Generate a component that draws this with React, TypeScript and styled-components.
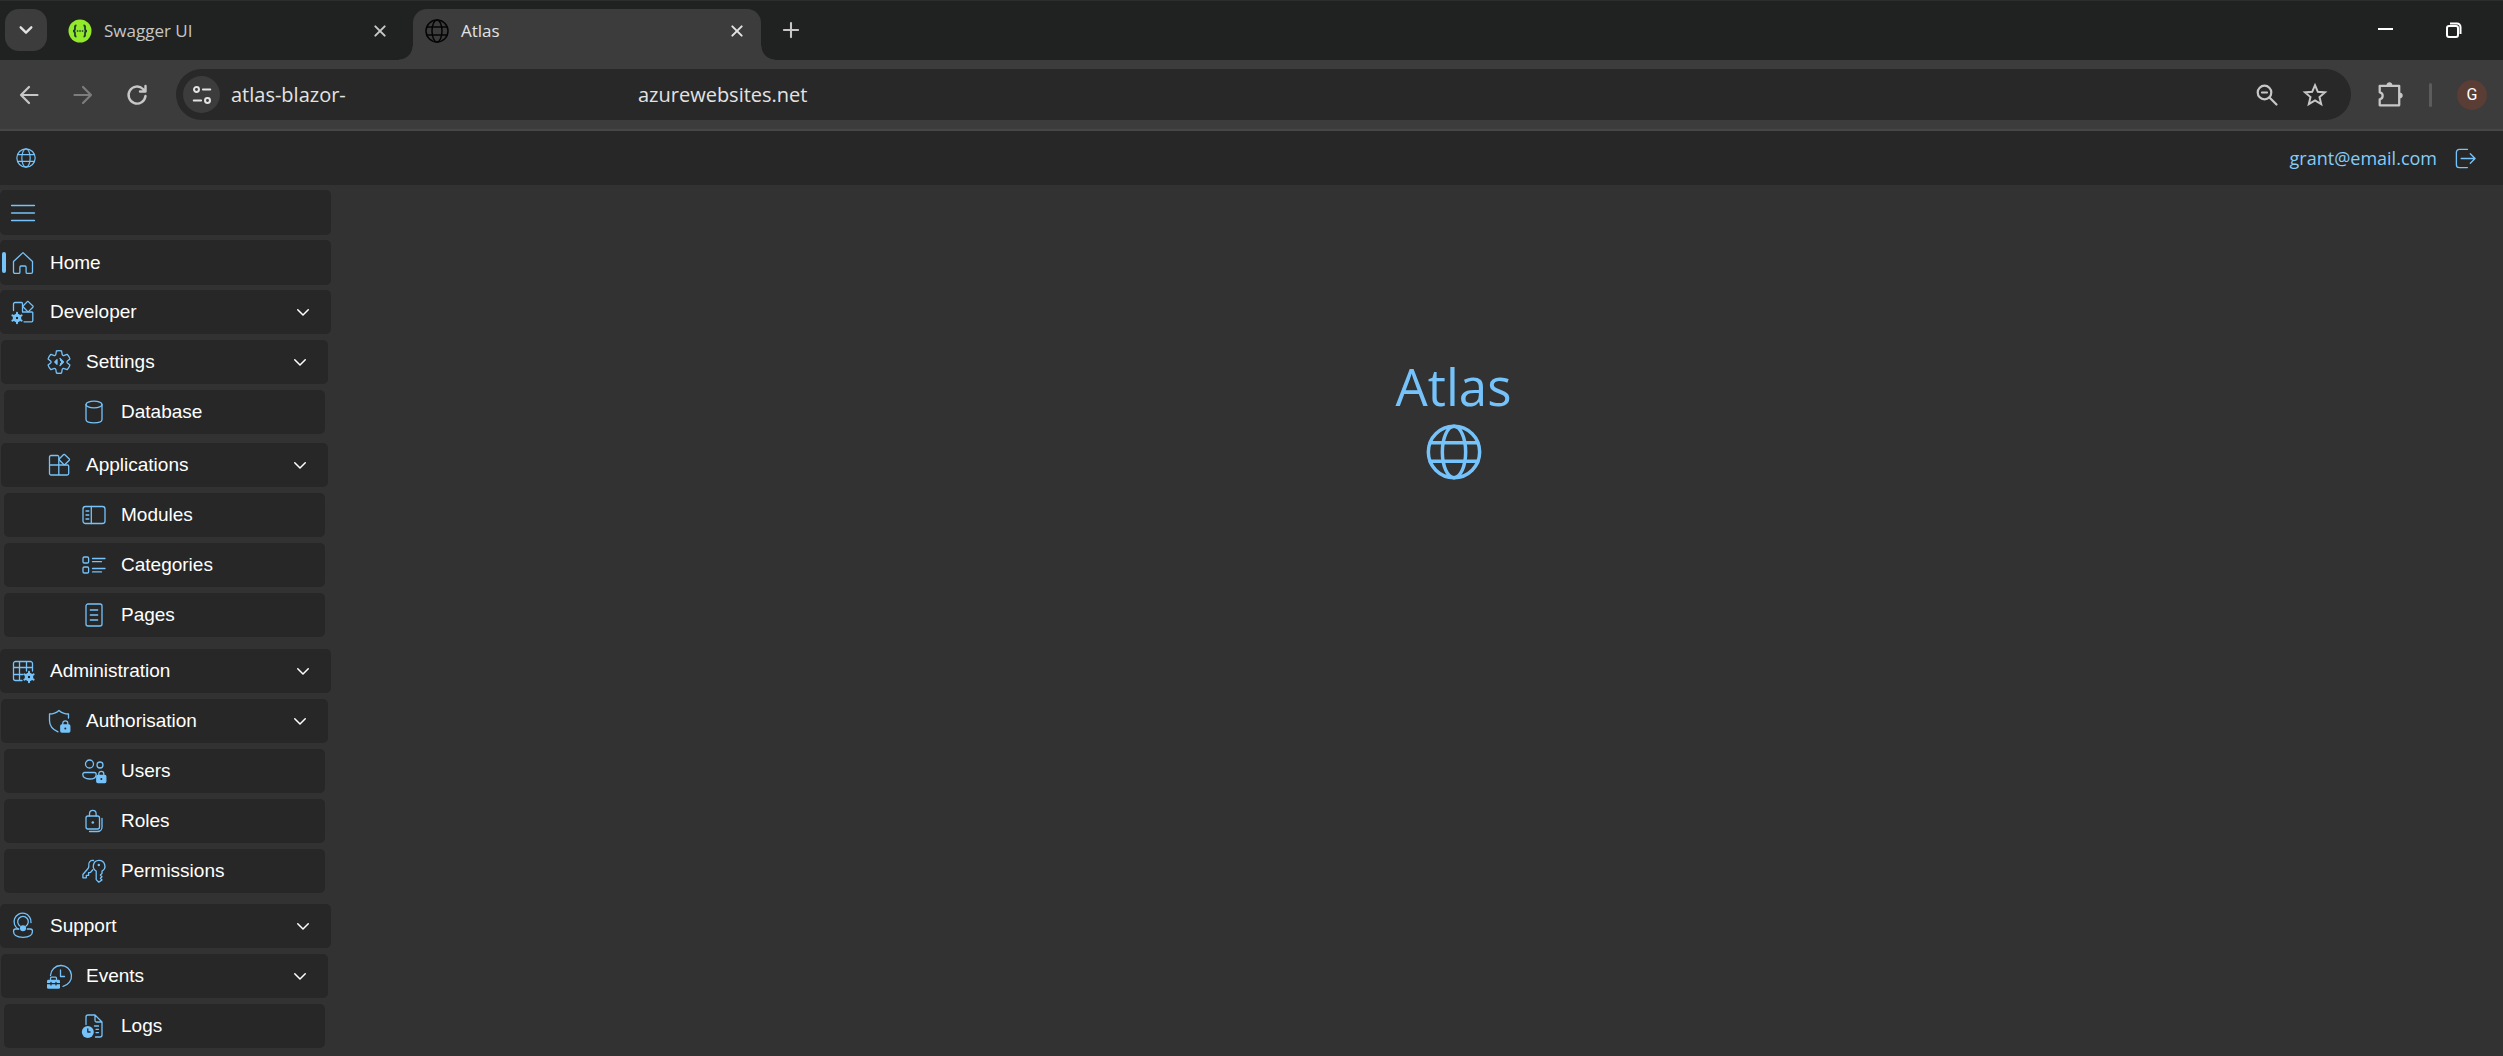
import React from "react";
import styled, { createGlobalStyle } from "styled-components";

const ui = '"Segoe UI", "Open Sans", "Noto Sans", sans-serif';
const accent = "#75c3fa";

const GlobalStyle = createGlobalStyle`
  *, *::before, *::after { box-sizing: border-box; }
  html, body { margin: 0; background: #323232; }
  body { font-family: ${ui}; color: #fff; }
  button { font: inherit; color: inherit; background: none; border: 0; padding: 0; cursor: pointer; }
  a { color: inherit; text-decoration: none; }
  svg { display: block; flex: none; }
`;

const Window = styled.div`
  display: flex;
  flex-direction: column;
  min-height: 100vh;
  background: #323232;
`;

/* ---------- browser chrome ---------- */

const TabStrip = styled.div`
  display: flex;
  align-items: flex-end;
  height: 60px;
  padding-left: 5px;
  background: #202221;
  border-top: 1px solid #2c2e2d;
`;

const TabSearch = styled.button`
  display: grid;
  place-items: center;
  width: 42px;
  height: 42px;
  margin-bottom: 9px;
  border-radius: 14px;
  background: #3c3c3c;
  color: #e3e3e3;
`;

const Tab = styled.div<{ $active?: boolean }>`
  position: relative;
  display: flex;
  align-items: center;
  gap: 12px;
  width: 348px;
  height: 51px;
  margin-left: 9px;
  padding: 0 12px 8px 12px;
  border-radius: 14px 14px 0 0;
  background: ${(p) => (p.$active ? "#3c3c3c" : "transparent")};
  color: ${(p) => (p.$active ? "#e3e3e3" : "#c7c7c7")};
  &::before, &::after {
    content: "";
    display: ${(p) => (p.$active ? "block" : "none")};
    position: absolute;
    bottom: 0;
    width: 14px;
    height: 14px;
  }
  &::before {
    right: 100%;
    background: radial-gradient(circle at 0 0, transparent 13px, #3c3c3c 14px);
  }
  &::after {
    left: 100%;
    background: radial-gradient(circle at 100% 0, transparent 13px, #3c3c3c 14px);
  }
`;

const TabTitle = styled.span`
  flex: 1;
  font-size: 17px;
  line-height: 24px;
`;

const IconButton = styled.button<{ $size?: number; $tone?: string }>`
  display: grid;
  place-items: center;
  width: ${(p) => p.$size ?? 24}px;
  height: ${(p) => p.$size ?? 24}px;
  color: ${(p) => p.$tone ?? "#c7c7c7"};
`;

const NewTab = styled.div`
  display: flex;
  align-items: center;
  height: 60px;
  padding-left: 18px;
`;

const WindowButtons = styled.div`
  display: flex;
  align-items: center;
  gap: 44px;
  height: 60px;
  margin-left: auto;
  padding-right: 37px;
`;

const Toolbar = styled.div`
  display: flex;
  align-items: center;
  height: 71px;
  padding: 0 16px 0 17px;
  background: #3c3c3c;
  border-bottom: 2px solid #474747;
`;

const NavButtons = styled.div`
  display: flex;
  gap: 30px;
  margin-right: 27px;
`;

const AddressBar = styled.div`
  display: flex;
  align-items: center;
  flex: 1;
  height: 51px;
  padding: 0 24px 0 7px;
  border-radius: 26px;
  background: #282828;
  font-size: 20px;
  line-height: 28px;
  color: #e3e3e3;
`;

const SiteInfo = styled.button`
  display: grid;
  place-items: center;
  width: 37px;
  height: 37px;
  margin-right: 11px;
  border-radius: 50%;
  background: #3c3c3c;
  color: #e3e3e3;
`;

const Host = styled.span`
  width: 407px;
`;

const AddressActions = styled.div`
  display: flex;
  gap: 24px;
  margin-left: auto;
`;

const ToolbarEnd = styled.div`
  display: flex;
  align-items: center;
  gap: 25px;
  margin-left: 25px;
`;

const Divider = styled.span`
  width: 3px;
  height: 24px;
  border-radius: 2px;
  background: #5c5c5c;
`;

const Avatar = styled.button`
  width: 30px;
  height: 30px;
  border-radius: 50%;
  background: #5a3d34;
  font-family: Roboto, sans-serif;
  font-size: 16px;
  line-height: 30px;
  color: #fff;
`;

/* ---------- application ---------- */

const Header = styled.header`
  display: flex;
  align-items: center;
  justify-content: space-between;
  height: 54px;
  padding: 0 26px 0 16px;
  background: #272727;
  color: ${accent};
`;

const Account = styled.div`
  display: flex;
  align-items: center;
  gap: 16px;
  font-size: 18px;
  line-height: 24px;
  color: #83cdfb;
`;

const Body = styled.div`
  display: flex;
  flex: 1;
`;

const Sidebar = styled.nav`
  display: flex;
  flex-direction: column;
  gap: 12px;
  width: 331px;
  padding: 5px 0 8px;
  font-family: Arial, "Liberation Sans", sans-serif;
`;

const List = styled.ul<{ $gap: number }>`
  display: flex;
  flex-direction: column;
  gap: ${(p) => p.$gap}px;
  margin: 0;
  padding: 0;
  list-style: none;
`;

const Item = styled.li`
  display: flex;
  flex-direction: column;
  gap: 6px;
`;

const rowInset = ["0", "0 3px 0 1px", "0 6px 0 4px"];
const rowPadding = ["0 19px 0 11px", "0 19px 0 46px", "0 19px 0 78px"];

const Row = styled.button<{ $level: number; $tall?: boolean }>`
  position: relative;
  display: flex;
  align-items: center;
  gap: 15px;
  height: ${(p) => (p.$tall ? 45 : 44)}px;
  margin: ${(p) => rowInset[p.$level]};
  padding: ${(p) => rowPadding[p.$level]};
  border-radius: 5px;
  background: #272727;
  font-size: 19px;
  line-height: 24px;
  text-align: left;
  color: #fff;
  > svg:first-of-type { color: ${accent}; }
`;

const Label = styled.span`
  flex: 1;
`;

const ActiveMark = styled.span`
  position: absolute;
  left: 2px;
  top: 12px;
  width: 4px;
  height: 21px;
  border-radius: 2px;
  background: ${accent};
`;

const Main = styled.main`
  display: flex;
  flex: 1;
  flex-direction: column;
  align-items: center;
  gap: 4px;
  padding: 167px 0 0 73px;
  color: ${accent};
`;

const Title = styled.h1`
  margin: 0;
  font-size: 51px;
  font-weight: 400;
  line-height: 68px;
`;

/* ---------- icons ---------- */

const Svg = ({ size = 24, w = 1.3, children }: { size?: number; w?: number; children: React.ReactNode }) => (
  <svg width={size} height={size} viewBox="0 0 24 24" fill="none" stroke="currentColor" strokeWidth={w} strokeLinecap="round" strokeLinejoin="round" overflow="visible" aria-hidden="true">
    {children}
  </svg>
);

const Globe = ({ size, w }: { size: number; w: number }) => (
  <Svg size={size} w={w}>
    <circle cx="12" cy="12" r="11" />
    <ellipse cx="12" cy="12" rx="5" ry="11" />
    <path d="M1.8 8h20.4M1.8 16h20.4" />
  </Svg>
);

const Chevron = () => (
  <Svg size={18} w={2}><path d="m5 9 7 7 7-7" /></Svg>
);

const MiniGear = ({ x, y }: { x: number; y: number }) => (
  <g transform={`translate(${x} ${y})`}>
    <circle r="3" fill="#272727" strokeWidth="2.6" />
    <path d="M0-5.3V-3M0 3v2.3M-4.6-2.6l2 1.1M2.6 1.5l2 1.1M-4.6 2.6l2-1.1M2.6-1.5l2-1.1" strokeWidth="2" />
    <circle r="2" strokeWidth="1.6" />
  </g>
);

const MiniLock = ({ x, y }: { x: number; y: number }) => (
  <g transform={`translate(${x} ${y})`}>
    <path d="M2.5 5V2.8a2.5 2.5 0 0 1 5 0V5" />
    <rect x="0.5" y="4.5" width="9" height="7" rx="1" fill="currentColor" />
    <circle cx="5" cy="8" r="1" fill="#272727" stroke="none" />
  </g>
);

const icons: Record<string, React.ReactNode> = {
  menu: <path d="M0.6 4.5h22.8M0.6 12h22.8M0.6 19.5h22.8" strokeWidth="1.5" />,
  home: <path d="M2.5 10.5 12 1.6l9.5 8.9V21a1.4 1.4 0 0 1-1.4 1.4h-3.8a1.2 1.2 0 0 1-1.2-1.2v-5a1.2 1.2 0 0 0-1.2-1.2h-3.8a1.2 1.2 0 0 0-1.2 1.2v5a1.2 1.2 0 0 1-1.2 1.2H3.9A1.4 1.4 0 0 1 2.5 21Z" />,
  developer: (
    <>
      <path d="M2.5 10.5V4A1.5 1.5 0 0 1 4 2.5h6.5a1 1 0 0 1 1 1V12H21a.8.8 0 0 1 .8.8v7.7a1.3 1.3 0 0 1-1.3 1.3H13" />
      <path d="m17.3 1.6 4.6 4.4a1 1 0 0 1 0 1.2l-4.2 4.2a1 1 0 0 1-1.2 0L12.3 7a1 1 0 0 1 0-1.2l4-4.2a.8.8 0 0 1 1 0Z" />
      <MiniGear x={6} y={18} />
    </>
  ),
  settings: (
    <>
      <path d="M9.4 1a11 11 0 0 1 5.2 0l.5 3.2a1.6 1.6 0 0 0 2.2 1.2l2.8-1.1a11 11 0 0 1 2.8 4.6l-2.5 2a1.5 1.5 0 0 0 0 2.2l2.5 2a11 11 0 0 1-2.8 4.6l-2.8-1.1a1.6 1.6 0 0 0-2.2 1.2l-.5 3.2a11 11 0 0 1-5.2 0l-.5-3.2a1.6 1.6 0 0 0-2.2-1.2l-2.8 1.1a11 11 0 0 1-2.8-4.6l2.5-2a1.5 1.5 0 0 0 0-2.2l-2.500-2a11 11 0 0 1 2.8-4.6l2.8 1.1a1.6 1.6 0 0 0 2.2-1.2Z" />
      <path d="M10 9.8v4.400L7.800 12Zm3-1.300 3.500 3.500-3.500 3.500" fill="currentColor" />
      <circle cx="12.800" cy="12" r="1.300" fill="#272727" stroke="none" />
    </>
  ),
  database: (
    <>
      <ellipse cx="12" cy="4.5" rx="8" ry="3.4" />
      <path d="M4 4.5v15c0 2 3.6 3.4 8 3.4s8-1.4 8-3.4v-15" />
    </>
  ),
  applications: (
    <>
      <path d="M2.5 12V4A1.5 1.5 0 0 1 4 2.5h6.5a1.3 1.3 0 0 1 1.3 1.3V22H4a1.5 1.5 0 0 1-1.5-1.500V12h18a1.2 1.2 0 0 1 1.2 1.2v7.3a1.5 1.5 0 0 1-1.5 1.5h-8.400" />
      <path d="m17.600 1.500 4.700 4.500a1 1 0 0 1 0 1.200l-4.400 4.300a1 1 0 0 1-1.200 0L12.400 7a1 1 0 0 1 0-1.200l4.200-4.300a.8.8 0 0 1 1 0Z" />
    </>
  ),
  modules: (
    <>
      <rect x="1" y="3.5" width="22" height="17" rx="2.5" />
      <path d="M9.3 3.500v17M4 8h2.800M4 12h2.800M4 16h2.800" />
    </>
  ),
  categories: (
    <>
      <rect x="1" y="4" width="5.6" height="6" rx="1.3" />
      <rect x="1" y="14" width="5.6" height="6" rx="1.3" />
      <path d="M10.500 5.500h12.500M10.500 8.700h9M10.500 15.500h12.500M10.500 18.900h9" />
    </>
  ),
  pages: (
    <>
      <rect x="4" y="1" width="16" height="22" rx="2" />
      <path d="M8.300 7h7.400M8.300 12h7.400M8.300 17h7.400" />
    </>
  ),
  administration: (
    <>
      <path d="M21.500 12V4.500a2 2 0 0 0-2-2h-15a2 2 0 0 0-2 2v15a2 2 0 0 0 2 2H11M8.500 2.500v19M15.500 2.500V12M2.500 8.500h19M2.500 15.500H12" />
      <MiniGear x={18} y={18} />
    </>
  ),
  authorisation: (
    <>
      <path d="M21.500 9V5c-3.500 0-6.800-1.200-9.500-3.600C9.300 3.800 6 5 2.500 5v6.500c0 5.200 3 9 8.500 11.300" />
      <MiniLock x={13.3} y={11.500} />
    </>
  ),
  users: (
    <>
      <circle cx="7.500" cy="5" r="4" />
      <circle cx="18" cy="6" r="3" />
      <path d="M2.800 13.500h9.500a1.900 1.900 0 0 1 1.900 1.900c0 3-2.800 4.600-6.700 4.600S.8 18.400.8 15.400a1.900 1.900 0 0 1 2-1.900Z" />
      <MiniLock x={14.3} y={12} />
    </>
  ),
  roles: (
    <>
      <rect x="4" y="7" width="13.5" height="13" rx="2" />
      <path d="M7.500 7V4.700a3.300 3.300 0 0 1 6.600 0V7M20 9.500V18a4.500 4.500 0 0 1-4.500 4.500H7.500" />
      <circle cx="10.800" cy="13.500" r="1.300" fill="currentColor" stroke="none" />
    </>
  ),
  permissions: (
    <>
      <path d="M16.800 1.300a5.800 5.800 0 0 1 3.200 10.800v2.400l-1.600 1.500 1.600 1.700-1.600 1.600 1.600 1.600-3.200 2.300-2.600-2.600V12.100a5.800 5.800 0 0 1 2.600-10.800Z" />
      <path d="M11.500 1.500C8.700.8 6 3.500 6.800 6.800 7 8.200 6.500 9 5.600 10L.9 15.500v3.300h3.400v-2.400h2.300v-2.800l2-.3 2.300-2.600" />
      <circle cx="16.800" cy="6" r="1.200" fill="currentColor" stroke="none" />
    </>
  ),
  support: (
    <>
      <path d="M7.200 15A8.500 8.500 0 1 1 20 8.500" />
      <path d="M9.200 12.200a5.300 5.300 0 1 1 5.600 0" />
      <circle cx="12" cy="14.300" r="2.400" fill="currentColor" />
      <path d="M7.800 15H4.600A2.300 2.300 0 0 0 2.500 17.300c0 4 4.200 6 9.500 6s9.500-2 9.500-6a2.300 2.300 0 0 0-2.200-2.300h-3" />
    </>
  ),
  events: (
    <>
      <path d="M3.500 11.500A10.500 10.500 0 1 1 16 22.300" />
      <path d="M13.500 6v6.500h4" />
      <path d="M3.500 15.500v-1.300a1 1 0 0 1 1-1h4a1 1 0 0 1 1 1v1.300" />
      <rect x="0" y="15.800" width="13" height="9" rx="1.400" fill="currentColor" stroke="none" />
      <path d="M0 19.600h13M4 18.300v2.600M9 18.300v2.600" stroke="#272727" />
    </>
  ),
  logs: (
    <>
      <path d="M4 10.500V3a2 2 0 0 1 2-2h7l7 7v13a2 2 0 0 1-2 2h-4.500M13 1v5.500A1.500 1.500 0 0 0 14.500 8H20M12.500 12h4M14 15.300h2.500M14 18.600h2.500" />
      <circle cx="5.800" cy="18" r="6" fill="currentColor" stroke="none" />
      <path d="M5.800 14.800V18h2.300" stroke="#272727" />
    </>
  ),
};

/* ---------- navigation data ---------- */

type Entry = { label: string; icon: string; children?: Entry[] };

const groups: Entry[] = [
  {
    label: "Developer", icon: "developer", children: [
      { label: "Settings", icon: "settings", children: [{ label: "Database", icon: "database" }] },
      { label: "Applications", icon: "applications", children: [
        { label: "Modules", icon: "modules" },
        { label: "Categories", icon: "categories" },
        { label: "Pages", icon: "pages" },
      ] },
    ],
  },
  {
    label: "Administration", icon: "administration", children: [
      { label: "Authorisation", icon: "authorisation", children: [
        { label: "Users", icon: "users" },
        { label: "Roles", icon: "roles" },
        { label: "Permissions", icon: "permissions" },
      ] },
    ],
  },
  {
    label: "Support", icon: "support", children: [
      { label: "Events", icon: "events", children: [{ label: "Logs", icon: "logs" }] },
    ],
  },
];

const NavItem = ({ entry, level }: { entry: Entry; level: number }) => (
  <Item>
    <Row $level={level} aria-expanded={entry.children ? true : undefined}>
      <Svg>{icons[entry.icon]}</Svg>
      <Label>{entry.label}</Label>
      {entry.children && <Chevron />}
    </Row>
    {entry.children && (
      <List $gap={level === 0 ? 9 : 6}>
        {entry.children.map((c) => <NavItem key={c.label} entry={c} level={level + 1} />)}
      </List>
    )}
  </Item>
);

export default function App() {
  return (
    <Window>
      <GlobalStyle />
      <TabStrip>
        <TabSearch aria-label="Search tabs"><Svg size={16} w={3.5}><path d="m4 8 8 8 8-8" /></Svg></TabSearch>
        <Tab>
          <svg width="24" height="24" viewBox="0 0 24 24" aria-hidden="true">
            <circle cx="12" cy="12" r="11.5" fill="#93ea2b" />
            <path d="M8.500 6.500C6.500 6.500 7 8 7 9.500S6.500 12 5 12c1.500 0 2 1 2 2.500s-.5 3 1.500 3M15.500 6.500c2 0 1.500 1.500 1.500 3s.5 2.500 2 2.500c-1.500 0-2 1-2 2.500s.5 3-1.500 3" fill="none" stroke="#1c3a36" strokeWidth="1.8" />
            <path d="M8.800 12h1.500M11.300 12h1.500M13.800 12h1.500" stroke="#1c3a36" strokeWidth="1.5" />
          </svg>
          <TabTitle>Swagger UI</TabTitle>
          <IconButton aria-label="Close Swagger UI"><Svg size={16} w={3}><path d="m5 5 14 14M19 5 5 19" /></Svg></IconButton>
        </Tab>
        <Tab $active>
          <svg width="24" height="24" viewBox="0 0 24 24" fill="none" stroke="#050505" strokeWidth="1.5" aria-hidden="true">
            <circle cx="12" cy="12" r="11" /><ellipse cx="12" cy="12" rx="5" ry="11" /><path d="M1.800 8h20.400M1.800 16h20.400" />
          </svg>
          <TabTitle>Atlas</TabTitle>
          <IconButton $tone="#e3e3e3" aria-label="Close Atlas"><Svg size={16} w={3}><path d="m5 5 14 14M19 5 5 19" /></Svg></IconButton>
        </Tab>
        <NewTab><IconButton aria-label="New tab"><Svg size={20} w={2.5}><path d="M12 3.500v17M3.500 12h17" /></Svg></IconButton></NewTab>
        <WindowButtons>
          <IconButton $tone="#fff" aria-label="Minimize"><svg width="16" height="16"><path d="M0 7h15" stroke="currentColor" strokeWidth="2" /></svg></IconButton>
          <IconButton $tone="#fff" aria-label="Restore">
            <svg width="18" height="18" fill="none" stroke="currentColor" strokeWidth="2"><rect x="2" y="5" width="11" height="11" rx="2" /><path d="M5 2.500h7A3.500 3.500 0 0 1 15.500 6v7" /></svg>
          </IconButton>
        </WindowButtons>
      </TabStrip>
      <Toolbar>
        <NavButtons>
          <IconButton aria-label="Back"><Svg size={24} w={2.2}><path d="M20.500 12H4M12 4l-8 8 8 8" /></Svg></IconButton>
          <IconButton $tone="#7d7d7d" aria-label="Forward"><Svg size={24} w={2.2}><path d="M3.500 12H20M12 4l8 8-8 8" /></Svg></IconButton>
          <IconButton aria-label="Reload"><Svg size={24} w={2.4}><path d="M20.500 13a8.500 8.500 0 1 1-2.500-7l2.500 2.500M20.500 3v5.500H15" /></Svg></IconButton>
        </NavButtons>
        <AddressBar>
          <SiteInfo aria-label="View site information">
            <Svg size={22} w={2.2}><circle cx="6" cy="6" r="2.7" /><path d="M13 6h8M3 18h8" /><circle cx="18" cy="18" r="2.7" /></Svg>
          </SiteInfo>
          <Host>atlas-blazor-</Host>
          <span>azurewebsites.net</span>
          <AddressActions>
            <IconButton aria-label="Zoom out"><Svg size={24} w={2.2}><circle cx="9.500" cy="9.500" r="6.800" /><path d="m14.500 14.500 7 7M7 9.500h5" /></Svg></IconButton>
            <IconButton aria-label="Bookmark this page"><Svg size={24} w={2}><path d="m12 2.200 2.800 6.600 7.200.6-5.500 4.700 1.700 7-6.200-3.700-6.200 3.700 1.700-7L2 9.400l7.200-.6Z" strokeLinejoin="miter" /></Svg></IconButton>
          </AddressActions>
        </AddressBar>
        <ToolbarEnd>
          <IconButton $size={28} aria-label="Extensions">
            <Svg size={26} w={2.1}>
              <path d="M2.500 3.500h18v18h-18v-5.500a3.300 3.300 0 0 0 0-6.500Z" />
              <path d="M9 3a2.500 2.500 0 0 1 5 0ZM21 10a2.500 2.500 0 0 1 0 5Z" fill="currentColor" strokeWidth="0.5" />
            </Svg>
          </IconButton>
          <Divider />
          <Avatar aria-label="Profile">G</Avatar>
        </ToolbarEnd>
      </Toolbar>
      <Header>
        <a href="#home" aria-label="Atlas home"><Globe size={20} w={1.4} /></a>
        <Account>
          <a href="#account">grant@email.com</a>
          <IconButton $tone={accent} aria-label="Log out">
            <Svg size={23} w={1.4}><path d="M14 2.500H5.500a3 3 0 0 0-3 3v13a3 3 0 0 0 3 3H14M7.500 12h14.500M17 7l5 5-5 5" /></Svg>
          </IconButton>
        </Account>
      </Header>
      <Body>
        <Sidebar>
          <List $gap={5}>
            <Item><Row $level={0} $tall aria-label="Toggle navigation"><Svg>{icons.menu}</Svg></Row></Item>
            <Item><Row $level={0} $tall aria-current="page"><ActiveMark /><Svg>{icons.home}</Svg><Label>Home</Label></Row></Item>
            <NavItem entry={groups[0]} level={0} />
          </List>
          <List $gap={11}>
            {groups.slice(1).map((g) => <NavItem key={g.label} entry={g} level={0} />)}
          </List>
        </Sidebar>
        <Main>
          <Title>Atlas</Title>
          <Globe size={56} w={1.5} />
        </Main>
      </Body>
    </Window>
  );
}
